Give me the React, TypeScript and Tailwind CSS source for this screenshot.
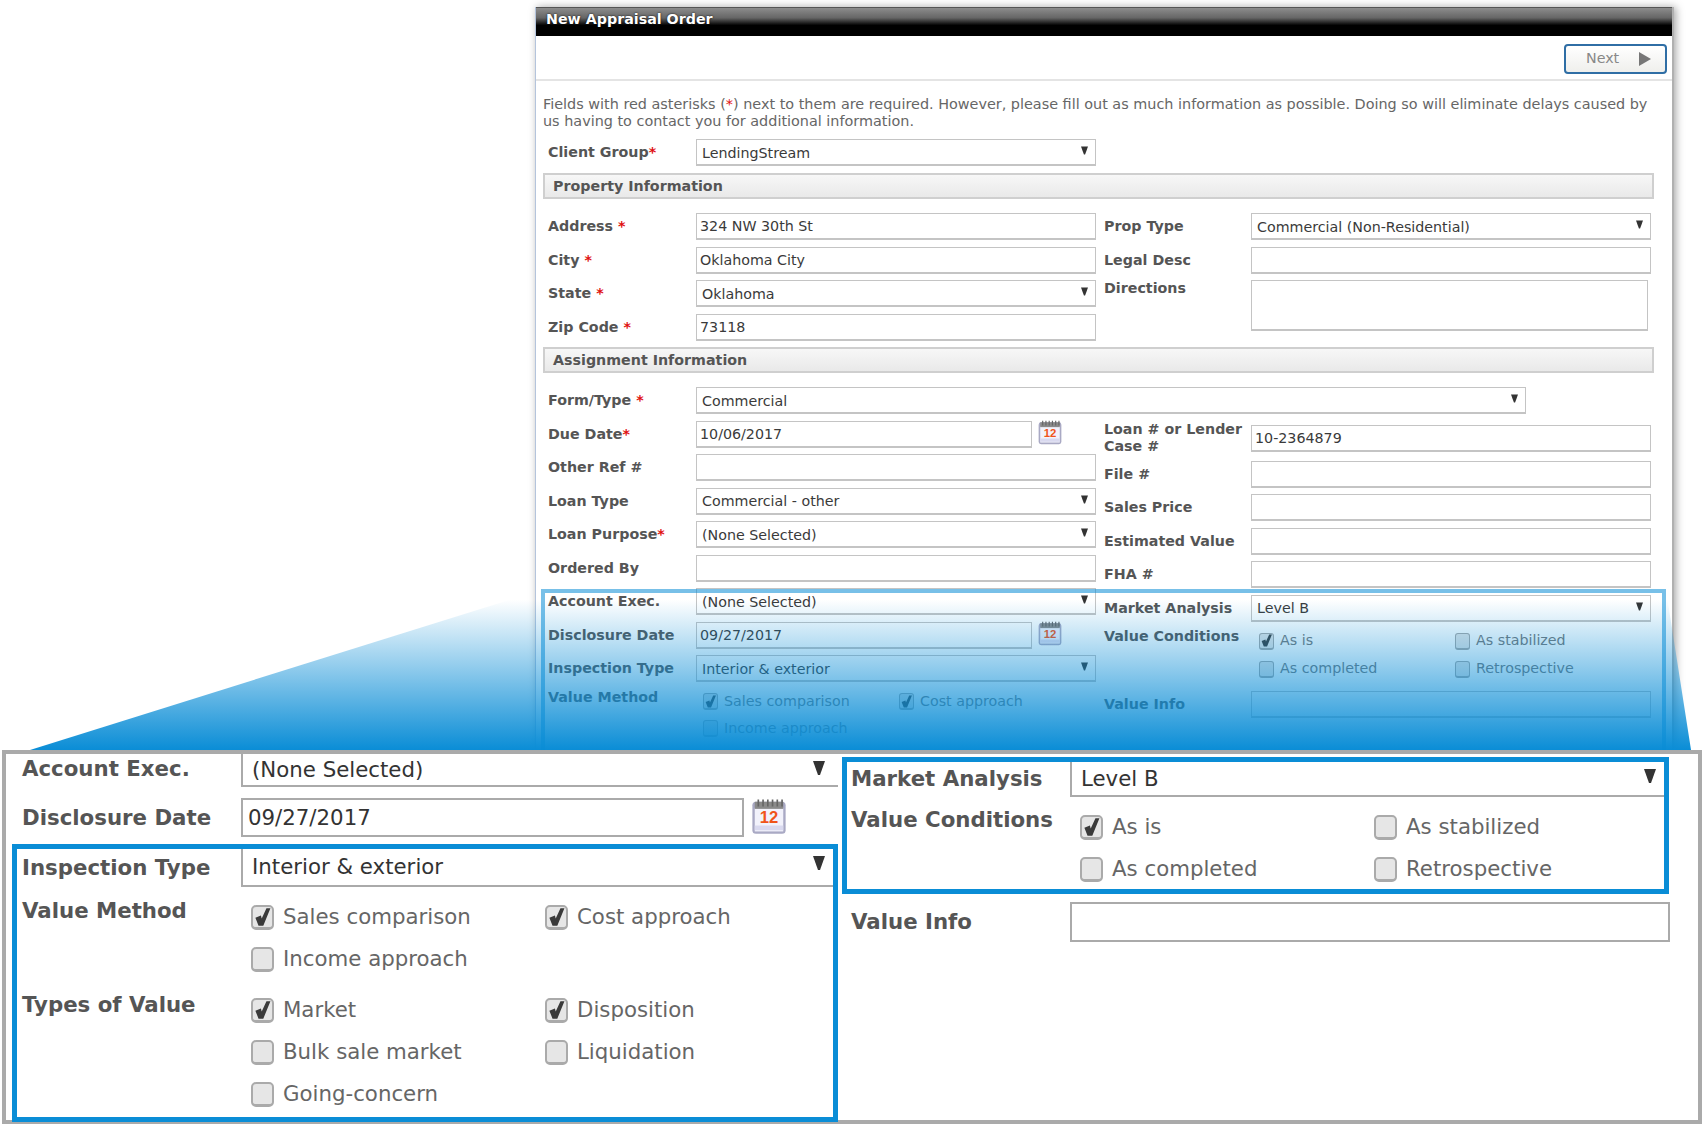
import React from "react";

const Star = () => <span className="text-[#e01010]">*</span>;

function Arrow({ big, far }: { big?: boolean; far?: boolean }) {
  return (
    <svg
      viewBox="0 0 12 14"
      className={
        far
          ? "absolute right-[13px] top-[7px] w-[12px] h-[14px]"
          : big
            ? "absolute right-[8px] top-[7px] w-[12px] h-[14px]"
            : "absolute right-[7px] top-[6px] w-[7px] h-[9px]"
      }
    >
      <polygon points="0,0 12,0 7,14 5,14" fill="#333" />
    </svg>
  );
}

function Sel({ value, className = "" }: { value: string; className?: string }) {
  return (
    <div className={"relative h-[27px] bg-white border border-[#c4c4c4] border-b-2 flex items-center pl-[5px] pt-[3px] text-[#3a3a3a] " + className}>
      {value}
      <Arrow />
    </div>
  );
}

function Txt({ value = "", className = "" }: { value?: string; className?: string }) {
  return (
    <div className={"h-[27px] bg-white border border-[#c4c4c4] border-b-2 flex items-center pl-[3px] pt-[2px] text-[#3a3a3a] " + className}>{value}</div>
  );
}

function Label({ children, className = "" }: { children: React.ReactNode; className?: string }) {
  return <div className={"font-bold text-[#555] leading-[17px] " + className}>{children}</div>;
}

function Row({ label, children, w = "w-[148px]" }: { label: React.ReactNode; children: React.ReactNode; w?: string }) {
  return (
    <div className="flex items-center h-[27px]">
      <Label className={"shrink-0 " + w}>{label}</Label>
      {children}
    </div>
  );
}

function Box({ checked, big }: { checked?: boolean; big?: boolean }) {
  return (
    <span
      className={
        (big
          ? "w-[23px] h-[25px] rounded-[5px] border-2 border-[#aaa] border-b-[3px] "
          : "w-[15px] h-[17px] rounded-[3px] border border-[#a8a8a8] border-b-2 ") +
        "shrink-0 bg-[#e6e6e6] flex items-center justify-center"
      }
    >
      {checked && (
        <svg viewBox="0 0 24 24" className={big ? "w-[20px] h-[22px]" : "w-[13px] h-[15px]"}>
          <polygon points="3,13 10,10 11,14 17,1 22,1 13,23 7,23" fill="#3a3a3a" />
        </svg>
      )}
    </span>
  );
}

function Check({ label, checked }: { label: string; checked?: boolean }) {
  return (
    <div className="flex items-center gap-[6px] h-[18px] text-[#777] whitespace-nowrap">
      <Box checked={checked} />
      <span>{label}</span>
    </div>
  );
}

function BigCheck({ label, checked }: { label: string; checked?: boolean }) {
  return (
    <div className="flex items-center gap-[9px] h-[26px] text-[#666] whitespace-nowrap">
      <Box big checked={checked} />
      <span>{label}</span>
    </div>
  );
}

function Calendar({ big }: { big?: boolean }) {
  return (
    <svg viewBox="0 0 32 32" className={big ? "w-[38px] h-[38px] ml-[6px] -mt-[3px] shrink-0" : "w-[26px] h-[26px] ml-[5px] -mt-[4px] shrink-0"}>
      <rect x="2" y="4" width="28" height="27" rx="3" fill="#a9a9c4" />
      <rect x="4" y="9" width="24" height="20" fill="#f2f2fb" />
      <rect x="4" y="4" width="24" height="6" fill="#8a8a8a" />
      <path d="M7 2v6M11 2v6M15 2v6M19 2v6M23 2v6M27 2v6" stroke="#666" strokeWidth="1.4" />
      <text x="16" y="22" textAnchor="middle" fontSize="14" fontWeight="700" fill="#f0541a" fontFamily="Liberation Sans, sans-serif">12</text>
      <rect x="4" y="24" width="24" height="4" fill="#d9d9ef" />
    </svg>
  );
}

function Section({ title }: { title: string }) {
  return (
    <div className="h-[26px] w-[1111px] border-2 border-[#cfcfcf] bg-gradient-to-b from-[#f7f7f7] to-[#e9e9e9] flex items-center pl-[8px] pt-[1px] font-bold text-[#555]">
      {title}
    </div>
  );
}

function BigSel({ value, className = "", far }: { value: string; className?: string; far?: boolean }) {
  return (
    <div className={"relative flex-1 border-l-2 border-b-2 border-[#aaa] bg-white flex items-center pl-[9px] text-[#333] " + className}>
      {value}
      <Arrow big far={far} />
    </div>
  );
}

function BigLabel({ children, className = "" }: { children: React.ReactNode; className?: string }) {
  return <div className={"w-[219px] shrink-0 font-bold text-[#555] " + className}>{children}</div>;
}

export default function App() {
  return (
    <div className="relative w-[1704px] h-[1135px] bg-white overflow-hidden font-['DejaVu_Sans',Verdana,sans-serif] text-[14.25px]">
      {/* Application window, cut off where the enlarged panel begins */}
      <div className="pt-[7px] pl-[535px] h-[750px]">
        <div className="w-[1139px] h-[743px] overflow-hidden bg-white border-l border-r-2 border-l-[#b4c4dc] border-r-[#b0b0b0] shadow-[2px_0_8px_rgba(0,0,0,0.35)]">
          <div className="h-[29px] border-t border-[#555] bg-[linear-gradient(#8c8c8c,#666_35%,#000_62%)] flex items-center pl-[10px] pb-[5px] text-white font-bold [text-shadow:0_0_2px_#000]">
            New Appraisal Order
          </div>
          <div className="h-[45px] border-b-2 border-[#e4e4e4] flex justify-end pt-[8px] pr-[5px]">
            <div className="w-[103px] h-[30px] rounded-[4px] border-2 border-[#2f6ea5] bg-gradient-to-b from-white to-[#efefec] flex items-center pl-[20px] text-[#888] gap-[20px]">
              Next
              <svg viewBox="0 0 12 14" className="w-[12px] h-[14px]">
                <polygon points="0,0 12,7 0,14" fill="#777" />
              </svg>
            </div>
          </div>

          <div className="pl-[7px]">
            <p className="pt-[15px] w-[1108px] leading-[17px] text-[14.4px] text-[#666]">
              Fields with red asterisks (<Star />) next to them are required. However, please fill out as much information as possible. Doing so will eliminate delays caused by us having to contact you for additional information.
            </p>

            <div className="pl-[5px] mt-[9px]">
              <Row label={<>Client Group<Star /></>}>
                <Sel value="LendingStream" className="w-[400px]" />
              </Row>
            </div>

            <div className="mt-[7px]">
              <Section title="Property Information" />
            </div>

            <div className="flex mt-[14px] pl-[5px] h-[127.5px]">
              <div className="w-[556px] flex flex-col gap-[6.5px]">
                <Row label={<>Address <Star /></>}><Txt value="324 NW 30th St" className="w-[400px]" /></Row>
                <Row label={<>City <Star /></>}><Txt value="Oklahoma City" className="w-[400px]" /></Row>
                <Row label={<>State <Star /></>}><Sel value="Oklahoma" className="w-[400px]" /></Row>
                <Row label={<>Zip Code <Star /></>}><Txt value="73118" className="w-[400px]" /></Row>
              </div>
              <div className="flex flex-col gap-[6.5px] w-[547px]">
                <Row label="Prop Type" w="w-[147px]"><Sel value="Commercial (Non-Residential)" className="w-[400px]" /></Row>
                <Row label="Legal Desc" w="w-[147px]"><Txt className="w-[400px]" /></Row>
                <div className="flex">
                  <Label className="w-[147px] shrink-0">Directions</Label>
                  <div className="w-[397px] h-[51px] border border-[#c4c4c4] border-b-2" />
                </div>
              </div>
            </div>

            <div className="mt-[6.5px]">
              <Section title="Assignment Information" />
            </div>

            <div className="mt-[14px] pl-[5px]">
              <Row label={<>Form/Type <Star /></>}>
                <Sel value="Commercial" className="w-[830px]" />
              </Row>
            </div>

            <div className="flex mt-[6.5px] pl-[5px]">
              <div className="w-[556px] flex flex-col gap-[6.5px]">
                <Row label={<>Due Date<Star /></>}>
                  <Txt value="10/06/2017" className="w-[336px]" />
                  <Calendar />
                </Row>
                <Row label="Other Ref #"><Txt className="w-[400px]" /></Row>
                <Row label="Loan Type"><Sel value="Commercial - other" className="w-[400px]" /></Row>
                <Row label={<>Loan Purpose<Star /></>}><Sel value="(None Selected)" className="w-[400px]" /></Row>
                <Row label="Ordered By"><Txt className="w-[400px]" /></Row>
                <Row label="Account Exec."><Sel value="(None Selected)" className="w-[400px]" /></Row>
                <Row label="Disclosure Date">
                  <Txt value="09/27/2017" className="w-[336px]" />
                  <Calendar />
                </Row>
                <Row label="Inspection Type"><Sel value="Interior & exterior" className="w-[400px]" /></Row>
                <div className="flex">
                  <Label className="w-[148px] shrink-0">Value Method</Label>
                  <div className="grid grid-cols-[196px_1fr] gap-y-[9px] pl-[7px] pt-[4px]">
                    <Check checked label="Sales comparison" />
                    <Check checked label="Cost approach" />
                    <Check label="Income approach" />
                  </div>
                </div>
              </div>
              <div className="flex flex-col w-[547px] pt-[4px] gap-[6.5px]">
                <div className="mb-[2.5px]">
                  <Row label={<>Loan # or Lender<br />Case #</>} w="w-[147px]"><Txt value="10-2364879" className="w-[400px]" /></Row>
                </div>
                <Row label="File #" w="w-[147px]"><Txt className="w-[400px]" /></Row>
                <Row label="Sales Price" w="w-[147px]"><Txt className="w-[400px]" /></Row>
                <Row label="Estimated Value" w="w-[147px]"><Txt className="w-[400px]" /></Row>
                <Row label="FHA #" w="w-[147px]"><Txt className="w-[400px]" /></Row>
                <Row label="Market Analysis" w="w-[147px]"><Sel value="Level B" className="w-[400px]" /></Row>
                <div className="flex -mt-[1px]">
                  <Label className="w-[147px] shrink-0 pt-[1px]">Value Conditions</Label>
                  <div className="grid grid-cols-[196px_1fr] gap-y-[10px] pl-[8px] pt-[5px]">
                    <Check checked label="As is" />
                    <Check label="As stabilized" />
                    <Check label="As completed" />
                    <Check label="Retrospective" />
                  </div>
                </div>
                <div className="mt-[6px]">
                  <Row label="Value Info" w="w-[147px]"><Txt className="w-[400px]" /></Row>
                </div>
              </div>
            </div>
          </div>
        </div>
      </div>

      {/* Callout fan: blue gradient rising from the enlarged panel to the highlighted area */}
      <div className="absolute left-[30px] top-[590px] w-[1661px] h-[160px] bg-gradient-to-b from-[#0a8dd6]/0 from-[6%] to-[#0a8dd6] [clip-path:polygon(0px_160px,511px_0px,1636px_0px,1661px_160px)]" />
      <div className="absolute left-[541px] top-[589px] w-[1125px] h-[161px] border-[4px] border-b-0 border-[#0a8dd6]/55" />

      {/* Enlarged panel */}
      <div className="ml-[2px] w-[1700px] h-[374px] border-x-[4px] border-y-[4px] border-[#aaaaaa] flex bg-white text-[21.3px]">
        <div className="w-[832px] shrink-0 flex flex-col">
          <div className="flex h-[33px] shrink-0 pl-[16px]">
            <BigLabel className="pb-[6px] -mt-[1px]">Account Exec.</BigLabel>
            <BigSel far value="(None Selected)" className="border-r-0" />
          </div>
          <div className="flex h-[39px] shrink-0 mt-[11px] pl-[16px] items-center">
            <BigLabel>Disclosure Date</BigLabel>
            <div className="w-[503px] h-[39px] border-2 border-[#aaa] flex items-center pl-[5px] text-[#333]">09/27/2017</div>
            <Calendar big />
          </div>
          <div className="ml-[6px] mt-[7px] h-[278px] shrink-0 border-[5px] border-[#0a8dd6] pl-[5px] text-[#555]">
            <div className="flex h-[38px]">
              <BigLabel className="flex items-center">Inspection Type</BigLabel>
              <BigSel value="Interior & exterior" className="border-l-2" />
            </div>
            <div className="flex mt-[11px]">
              <BigLabel className="-mt-[3px]">Value Method</BigLabel>
              <div className="grid grid-cols-[294px_1fr] gap-y-[16px] pl-[10px] pt-[6px]">
                <BigCheck checked label="Sales comparison" />
                <BigCheck checked label="Cost approach" />
                <BigCheck label="Income approach" />
              </div>
            </div>
            <div className="flex mt-[19px]">
              <BigLabel className="-mt-[2px]">Types of Value</BigLabel>
              <div className="grid grid-cols-[294px_1fr] gap-y-[16px] pl-[10px] pt-[6px]">
                <BigCheck checked label="Market" />
                <BigCheck checked label="Disposition" />
                <BigCheck label="Bulk sale market" />
                <BigCheck label="Liquidation" />
                <BigCheck label="Going-concern" />
              </div>
            </div>
          </div>
        </div>
        <div className="ml-[4px] flex-1 flex flex-col pt-[3px]">
          <div className="w-[827px] h-[137px] border-[5px] border-[#0a8dd6] pl-[4px]">
            <div className="flex h-[35px]">
              <BigLabel className="flex items-center -mt-[1px]">Market Analysis</BigLabel>
              <BigSel value="Level B" />
            </div>
            <div className="flex mt-[11px]">
              <BigLabel className="-mt-[4px]">Value Conditions</BigLabel>
              <div className="grid grid-cols-[294px_1fr] gap-y-[16px] pl-[10px] pt-[6px]">
                <BigCheck checked label="As is" />
                <BigCheck label="As stabilized" />
                <BigCheck label="As completed" />
                <BigCheck label="Retrospective" />
              </div>
            </div>
          </div>
          <div className="flex items-center mt-[8px] pl-[9px]">
            <BigLabel>Value Info</BigLabel>
            <div className="w-[600px] h-[40px] border-2 border-[#aaa]" />
          </div>
        </div>
      </div>
    </div>
  );
}
